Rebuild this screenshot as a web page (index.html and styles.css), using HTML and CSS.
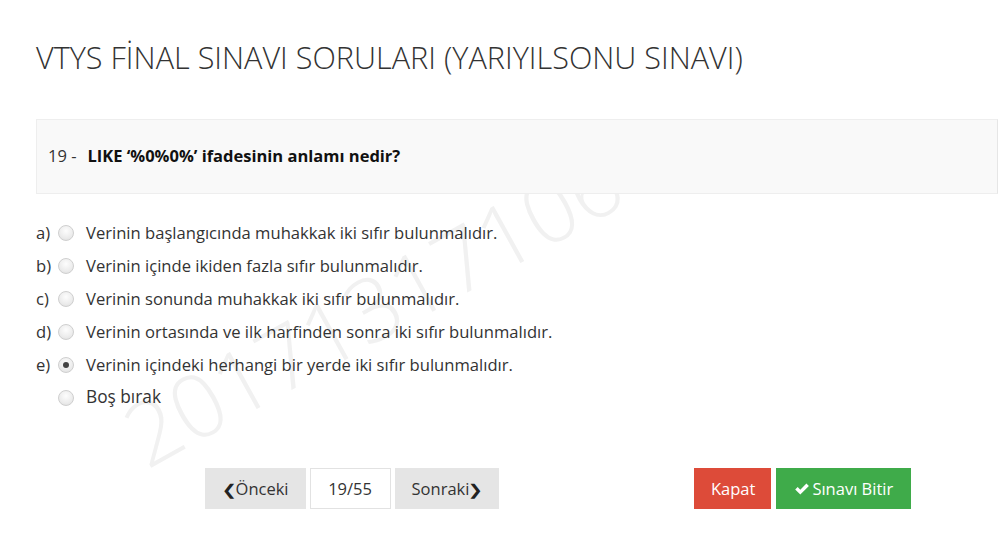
FILE: index.html
```html
<!DOCTYPE html>
<html lang="tr">
<head>
<meta charset="utf-8">
<link rel="stylesheet" href="styles.css">
</head>
<body>
<div class="page">
  <div class="watermark">20171317106</div>
  <h1 class="title">VTYS FİNAL SINAVI SORULARI (YARIYILSONU SINAVI)</h1>
  <div class="question">
    <span class="qno">19 -</span>
    <span class="qtext">LIKE ‘%0%0%’ ifadesinin anlamı nedir?</span>
  </div>
  <div class="options">
    <div class="opt"><span class="letter">a)</span><span class="radio"></span><span class="otext">Verinin başlangıcında muhakkak iki sıfır bulunmalıdır.</span></div>
    <div class="opt"><span class="letter">b)</span><span class="radio"></span><span class="otext">Verinin içinde ikiden fazla sıfır bulunmalıdır.</span></div>
    <div class="opt"><span class="letter">c)</span><span class="radio"></span><span class="otext">Verinin sonunda muhakkak iki sıfır bulunmalıdır.</span></div>
    <div class="opt"><span class="letter">d)</span><span class="radio"></span><span class="otext">Verinin ortasında ve ilk harfinden sonra iki sıfır bulunmalıdır.</span></div>
    <div class="opt"><span class="letter">e)</span><span class="radio checked"></span><span class="otext">Verinin içindeki herhangi bir yerde iki sıfır bulunmalıdır.</span></div>
    <div class="opt blank"><span class="letter"></span><span class="radio"></span><span class="otext">Boş bırak</span></div>
  </div>
  <div class="controls">
    <div class="nav">
      <button class="btn grey"><span class="chev">&#10094;</span>Önceki</button>
      <span class="counter">19/55</span>
      <button class="btn grey">Sonraki<span class="chev">&#10095;</span></button>
    </div>
    <div class="actions">
      <button class="btn red">Kapat</button>
      <button class="btn green"><svg class="check" viewBox="0 0 16 14" width="16" height="14"><path d="M1.2 7.6 L3.7 5.1 L6.3 7.7 L12.4 1.4 L14.9 3.9 L6.3 12.5 Z" fill="#fff"/></svg>Sınavı Bitir</button>
    </div>
  </div>
</div>
</body>
</html>
```
FILE: styles.css
```css
html, body {
  margin: 0;
  padding: 0;
  background: #fff;
}
body {
  font-family: "Open Sans", "DejaVu Sans", sans-serif;
  color: #333;
}
.page {
  position: relative;
  width: 1007px;
  height: 555px;
  overflow: hidden;
  padding-left: 36px;
  padding-right: 9px;
  box-sizing: border-box;
}
.watermark {
  position: absolute;
  left: 147px;
  top: 392px;
  font-size: 88px;
  line-height: 88px;
  font-weight: 300;
  color: #f1f1f1;
  transform: rotate(-29deg);
  transform-origin: 0 78px;
  white-space: nowrap;
  z-index: 0;
}
.title {
  position: relative;
  margin: 0;
  padding-top: 34px;
  font-size: 30.6px;
  font-weight: 300;
  line-height: 46px;
  color: #333;
}
.question {
  position: relative;
  z-index: 1;
  margin-top: 39px;
  height: 73px;
  background: #f9f9f9;
  border: 1px solid #eeeeee;
  border-right-color: #e6e6e6;
  display: flex;
  align-items: center;
  padding-left: 11px;
  font-size: 16.5px;
  color: #111;
}
.qno {
  color: #333;
  margin-right: 11px;
  position: relative;
  top: -1px;
}
.qtext {
  font-weight: 700;
  position: relative;
  top: -1px;
}
.options {
  position: relative;
  margin-top: 22px;
}
.opt {
  display: flex;
  align-items: center;
  height: 33px;
  font-size: 16.6px;
  color: #333;
}
.letter {
  width: 20px;
  font-size: 16.6px;
}
.radio {
  width: 14px;
  height: 14px;
  border-radius: 50%;
  border: 1px solid #cfcfcf;
  background: radial-gradient(circle at 50% 35%, #fdfdfd 0%, #ececec 60%, #dcdcdc 100%);
  margin-left: 2px;
  margin-right: 12px;
  position: relative;
  flex-shrink: 0;
}
.radio.checked::after {
  content: "";
  position: absolute;
  left: 4px;
  top: 4px;
  width: 6px;
  height: 6px;
  border-radius: 50%;
  background: #444;
}
.blank .otext {
  font-size: 17.3px;
  position: relative;
  top: -1px;
}
.controls {
  position: relative;
  display: flex;
  align-items: center;
  margin-top: 54px;
  padding-left: 169px;
}
.nav {
  display: flex;
  align-items: center;
  gap: 4px;
}
.btn {
  border: none;
  height: 41px;
  font-family: "Open Sans", "DejaVu Sans", sans-serif;
  font-size: 16.5px;
  padding: 0 12px;
  display: inline-flex;
  align-items: center;
  cursor: pointer;
}
.grey {
  background: #e5e5e5;
  color: #333;
  padding: 0 17px;
}
.grey:first-child {
  padding: 0 17px 0 18px;
}
.chev {
  font-size: 15px;
  font-weight: 700;
  color: #222;
  transform: scaleX(1.2);
}
.counter {
  width: 79px;
  height: 39px;
  border: 1px solid #e2e2e2;
  display: inline-flex;
  align-items: center;
  justify-content: center;
  font-size: 16.5px;
  color: #333;
}
.actions {
  display: flex;
  gap: 5px;
  margin-left: 195px;
}
.red {
  background: #dd4b39;
  color: #fff;
  padding: 0 16px 0 17px;
}
.green {
  background: #3fab4a;
  color: #fff;
  padding: 0 18px 0 18px;
}
.check {
  margin-right: 2px;
}
```
